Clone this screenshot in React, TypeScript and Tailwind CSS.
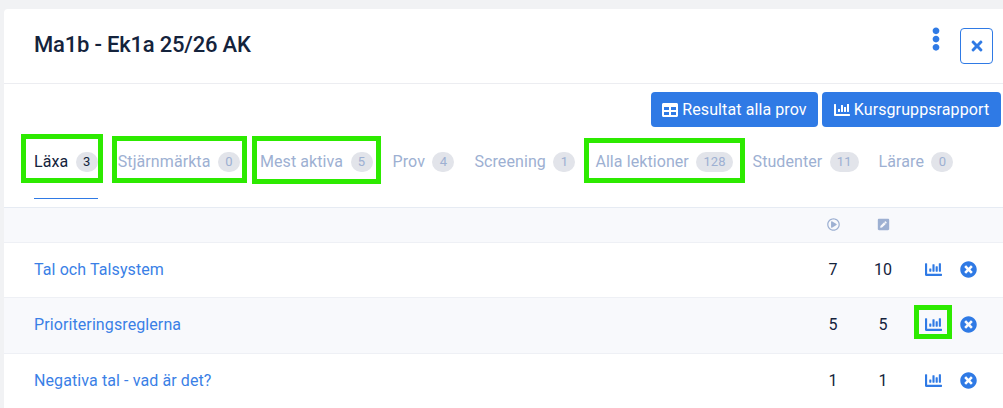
import { FaChartBar, FaEllipsisV, FaPenSquare, FaRegPlayCircle, FaTable, FaTimes, FaTimesCircle } from "react-icons/fa";

const tabs = [
  { label: "Läxa", count: 3, active: true, box: "-left-[13px] -right-[5px] -top-[18px] h-[49px]" },
  { label: "Stjärnmärkta", count: 0, box: "-left-[6px] -right-[7px] -top-[16px] h-[47px]" },
  { label: "Mest aktiva", count: 5, box: "-left-[8px] -right-[8px] -top-[16px] h-[48px]" },
  { label: "Prov", count: 4 },
  { label: "Screening", count: 1 },
  { label: "Alla lektioner", count: 128, box: "-left-[11px] -right-[12px] -top-[14px] h-[45px]" },
  { label: "Studenter", count: 11 },
  { label: "Lärare", count: 0 },
];

const rows = [
  { title: "Tal och Talsystem", views: 7, tasks: 10, size: "h-[55px] pb-[1px]" },
  { title: "Prioriteringsreglerna", views: 5, tasks: 5, size: "h-[56px] pb-[2px]", striped: true, marked: true },
  { title: "Negativa tal - vad är det?", views: 1, tasks: 1, size: "h-[55px] pb-[1px]" },
];

export default function App() {
  return (
    <main className="w-[1003px] h-[408px] overflow-hidden bg-[#f1f2f4] pt-[9px] pl-[4px] font-['Roboto',sans-serif]">
      <div className="h-full bg-white rounded-tl-[4px]">
        <header className="h-[75px] border-b border-[#ecedf1] flex justify-between pl-[30px] pr-[10px]">
          <h1 className="mt-[20px] text-[22px] leading-[32px] font-medium text-[#14233c] tracking-[-0.2px]">
            Ma1b - Ek1a 25/26 AK
          </h1>
          <div className="flex">
            <FaEllipsisV className="mt-[18px] text-[#2f7ae5] text-[24px]" />
            <button className="ml-[12px] mt-[19px] w-[33px] h-[36px] flex items-center justify-center border border-[#2f7ae5] rounded-[4px] text-[#2f7ae5] text-[16px]">
              <FaTimes />
            </button>
          </div>
        </header>

        <div className="flex justify-end gap-[4px] pt-[8px] pr-[2px]">
          <button className="h-[35px] w-[167px] flex items-center justify-center gap-[4px] rounded-[4px] bg-[#2f7ae5] text-white text-[16px] tracking-[0.1px]">
            <FaTable className="text-[16px]" />
            Resultat alla prov
          </button>
          <button className="h-[35px] w-[179px] flex items-center justify-center gap-[4px] rounded-[4px] bg-[#2f7ae5] text-white text-[16px] tracking-[0.1px]">
            <FaChartBar className="text-[16px]" />
            Kursgruppsrapport
          </button>
        </div>

        <nav className="h-[81px] border-b border-[#e6ebf3] flex gap-[20px] pl-[30px] pt-[25px]">
          {tabs.map((tab) => (
            <div
              key={tab.label}
              className={`relative h-[47px] flex gap-[7.5px] items-start text-[16px] leading-[20px] tracking-[0.08px] ${
                tab.active ? "text-[#14233c] border-b border-[#2f7ae5]" : "text-[#9db0d2]"
              }`}
            >
              <span>{tab.label}</span>
              <span
                className={`h-[20px] min-w-[22px] px-[7px] rounded-full bg-[#e2e4ea] text-[13px] text-center ${
                  tab.active ? "text-[#14233c]" : "text-[#9db0d2]"
                }`}
              >
                {tab.count}
              </span>
              {tab.box && <span className={`absolute border-[5px] border-[#2dea00] ${tab.box}`} />}
            </div>
          ))}
        </nav>

        <div className="h-[35px] pb-[2px] bg-[#f8f9fc] border-b border-[#eef0f5] flex items-center pl-[30px] pr-[25px] text-[#9db0d2] text-[13px]">
          <div className="flex-1" />
          <div className="w-[50px] flex justify-center"><FaRegPlayCircle /></div>
          <div className="w-[50px] flex justify-center"><FaPenSquare /></div>
          <div className="w-[50px]" />
          <div className="w-[20px]" />
        </div>

        {rows.map((row) => (
          <div
            key={row.title}
            className={`flex items-center border-b border-[#eef0f5] pl-[30px] pr-[25px] text-[16px] tracking-[0.1px] ${row.size} ${
              row.striped ? "bg-[#f8f9fc]" : "bg-white"
            }`}
          >
            <a className="flex-1 text-[#3a7fe6]">{row.title}</a>
            <div className="w-[50px] text-center text-[#14233c]">{row.views}</div>
            <div className="w-[50px] text-center text-[#14233c]">{row.tasks}</div>
            <div className="relative -mt-[1px] w-[50px] flex justify-center text-[#2f7ae5] text-[17px]">
              <FaChartBar />
              {row.marked && (
                <span className="absolute left-[6px] -top-[11px] w-[38px] h-[34px] border-[5px] border-[#2dea00]" />
              )}
            </div>
            <div className="-mt-[1px] w-[20px] flex justify-center text-[#2f7ae5] text-[17px]">
              <FaTimesCircle />
            </div>
          </div>
        ))}
      </div>
    </main>
  );
}
